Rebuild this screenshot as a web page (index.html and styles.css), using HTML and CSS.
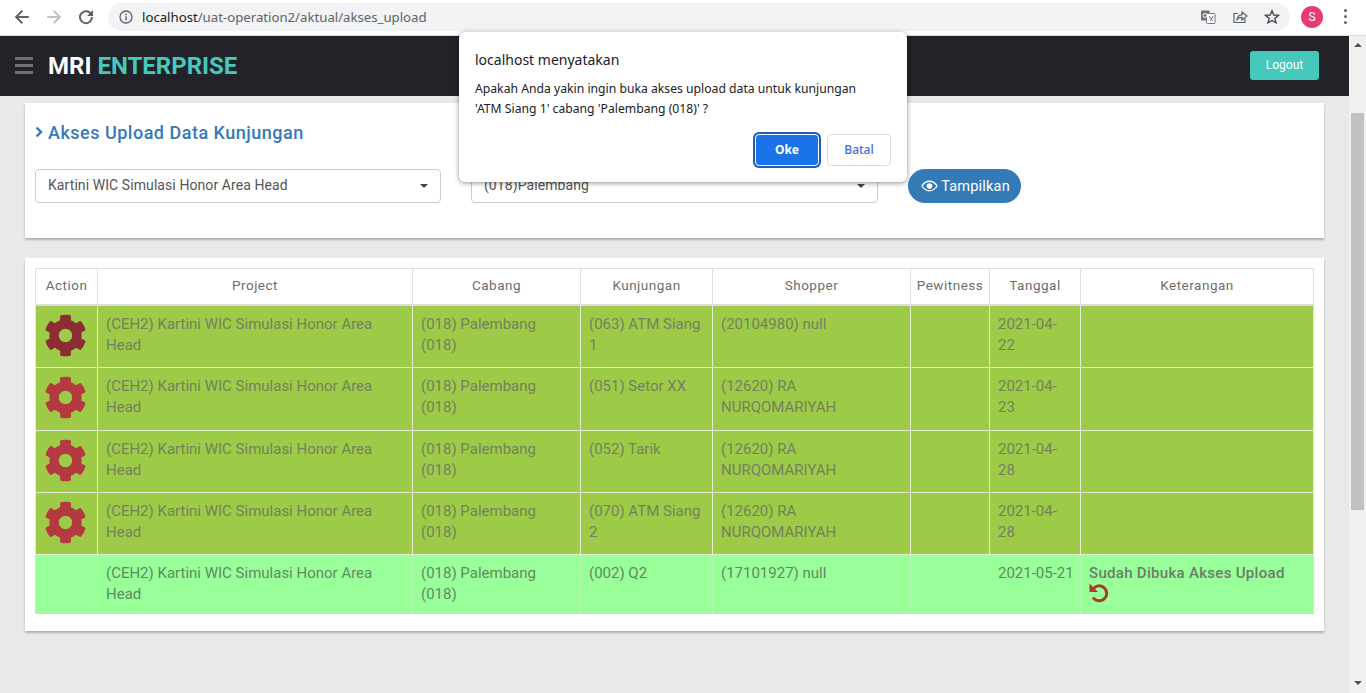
FILE: index.html
```html
<!Doctype html>
<html>

<head>
    <meta charset="utf-8">
    <title>Akses Upload</title>
    <link rel="stylesheet" href="styles.css">
</head>

<body>
    <!-- browser toolbar -->
    <div class="toolbar">
        <svg class="navIcon first" viewBox="0 0 16 16"><path d="M14.800 8H2.500M8.300 1.800L2.100 8 8.300 14.200" fill="none" stroke="#5f6368" stroke-width="2"/></svg>
        <svg class="navIcon" viewBox="0 0 16 16"><path d="M1.200 8H13.500M7.700 1.800L13.900 8 7.700 14.200" fill="none" stroke="#bdc1c6" stroke-width="2"/></svg>
        <svg class="navIcon reload" viewBox="0 0 16 16"><path d="M13.200 5.200A6 6 0 1 0 14 8" fill="none" stroke="#5f6368" stroke-width="2"/><path d="M15 1V7H9z" fill="#5f6368"/></svg>
        <div class="omnibox">
            <svg class="infoIcon" viewBox="0 0 14 14"><circle cx="7" cy="7" r="6" fill="none" stroke="#5f6368" stroke-width="1.300"/><path d="M7 6.200V10.400M7 3.600V5.200" stroke="#5f6368" stroke-width="1.400"/></svg>
            <span class="url"><b>localhost</b>/uat-operation2/aktual/akses_upload</span>
            <div class="omniIcons">
                <svg class="omniIcon" viewBox="0 0 16 16"><rect x="1" y="1.500" width="8.500" height="10" rx="1" fill="#6f7377"/><rect x="6.500" y="4.500" width="8.500" height="10" rx="1" fill="#fff" stroke="#6f7377"/><path d="M9 7l4 5M13 7l-3 5" stroke="#6f7377" stroke-width="1" fill="none"/><circle cx="5" cy="6.500" r="2" fill="none" stroke="#fff"/></svg>
                <svg class="omniIcon" viewBox="0 0 16 16"><path d="M13 9.500V13.500H2V4.500H6" fill="none" stroke="#5f6368" stroke-width="1.200"/><path d="M5 10.500C5.500 7.500 7.500 5.800 10 5.600V3l5 4-5 4V8.400C8 8.400 6.300 9 5 10.500z" fill="none" stroke="#5f6368" stroke-width="1.200"/></svg>
                <svg class="omniIcon" viewBox="0 0 16 16"><path d="M8 1.800L9.800 6 14.400 6.400 10.900 9.400 12 13.900 8 11.500 4 13.900 5.100 9.400 1.600 6.400 6.200 6z" fill="none" stroke="#45494d" stroke-width="1.400"/></svg>
            </div>
        </div>
        <div class="avatar">S</div>
        <div class="kebab"><i></i><i></i><i></i></div>
    </div>

    <div class="viewport">
        <div class="page">
            <div class="navbar">
                <div class="burger"><i></i><i></i><i></i></div>
                <div class="logo">MRI <span class="logoAccent">ENTERPRISE</span></div>
                <button class="logoutButton">Logout</button>
            </div>

            <div class="card filterCard">
                <h4 class="cardTitle">
                    <svg class="chevron" viewBox="0 0 8 12"><path d="M1.500 1.500L6 6 1.500 10.500" fill="none" stroke="#337ab7" stroke-width="2.400"/></svg>
                    <span>Akses Upload Data Kunjungan</span>
                </h4>
                <div class="filterRow">
                    <div class="selectBox">Kartini WIC Simulasi Honor Area Head<span class="caret"></span></div>
                    <div class="selectBox">(018)Palembang<span class="caret"></span></div>
                    <button class="showButton">
                        <svg class="eye" viewBox="0 0 18 12"><path d="M1 6C3 2.800 5.800 1 9 1s6 1.800 8 5c-2 3.200-4.800 5-8 5S3 9.200 1 6z" fill="none" stroke="#fff" stroke-width="1.400"/><circle cx="9" cy="6" r="3" fill="#fff"/></svg>
                        Tampilkan
                    </button>
                </div>
            </div>

            <div class="card tableCard">
                <table class="dataTable">
                    <colgroup>
                        <col class="colAction"><col class="colProject"><col class="colCabang"><col class="colKunjungan">
                        <col class="colShopper"><col class="colPewitness"><col class="colTanggal"><col class="colKet">
                    </colgroup>
                    <thead>
                        <tr>
                            <th>Action</th><th>Project</th><th>Cabang</th><th>Kunjungan</th>
                            <th>Shopper</th><th>Pewitness</th><th>Tanggal</th><th>Keterangan</th>
                        </tr>
                    </thead>
                    <tbody>
                        <tr class="rowLocked rowTall">
                            <td class="actionCell"><svg class="gear gearHover" viewBox="0 0 512 512"><use href="#cog"/></svg></td>
                            <td>(CEH2) Kartini WIC Simulasi Honor Area Head</td><td>(018) Palembang (018)</td><td>(063) ATM Siang 1</td>
                            <td>(20104980) null</td><td></td><td>2021-04-22</td><td></td>
                        </tr>
                        <tr class="rowLocked rowTall">
                            <td class="actionCell"><svg class="gear" viewBox="0 0 512 512"><use href="#cog"/></svg></td>
                            <td>(CEH2) Kartini WIC Simulasi Honor Area Head</td><td>(018) Palembang (018)</td><td>(051) Setor XX</td>
                            <td>(12620) RA NURQOMARIYAH</td><td></td><td>2021-04-23</td><td></td>
                        </tr>
                        <tr class="rowLocked">
                            <td class="actionCell"><svg class="gear" viewBox="0 0 512 512"><use href="#cog"/></svg></td>
                            <td>(CEH2) Kartini WIC Simulasi Honor Area Head</td><td>(018) Palembang (018)</td><td>(052) Tarik</td>
                            <td>(12620) RA NURQOMARIYAH</td><td></td><td>2021-04-28</td><td></td>
                        </tr>
                        <tr class="rowLocked">
                            <td class="actionCell"><svg class="gear" viewBox="0 0 512 512"><use href="#cog"/></svg></td>
                            <td>(CEH2) Kartini WIC Simulasi Honor Area Head</td><td>(018) Palembang (018)</td><td>(070) ATM Siang 2</td>
                            <td>(12620) RA NURQOMARIYAH</td><td></td><td>2021-04-28</td><td></td>
                        </tr>
                        <tr class="rowOpen">
                            <td></td>
                            <td>(CEH2) Kartini WIC Simulasi Honor Area Head</td><td>(018) Palembang (018)</td><td>(002) Q2</td>
                            <td>(17101927) null</td><td></td><td class="noWrap">2021-05-21</td>
                            <td><b class="opened">Sudah Dibuka Akses Upload</b>
                                <svg class="undo" viewBox="0 0 20 20"><path d="M4.500 5.500A7.500 7.500 0 1 1 4 14.500" fill="none" stroke="#a93a2c" stroke-width="3"/><path d="M0.500 0.500L9 9H0.500z" fill="#a93a2c"/></svg>
                            </td>
                        </tr>
                    </tbody>
                </table>
            </div>
        </div>

        <div class="scrollbar">
            <span class="arrowUp"></span>
            <div class="thumb"></div>
            <span class="arrowDown"></span>
        </div>
    </div>

    <!-- chrome confirm dialog -->
    <div class="dialog">
        <div class="dialogTitle">localhost menyatakan</div>
        <div class="dialogText">Apakah Anda yakin ingin buka akses upload data untuk kunjungan<br>'ATM Siang 1' cabang 'Palembang (018)' ?</div>
        <div class="dialogButtons">
            <button class="okButton">Oke</button>
            <button class="cancelButton">Batal</button>
        </div>
    </div>

    <svg class="defs">
        <defs>
            <path id="cog" d="M487.400 315.700l-42.600-24.600c4.300-23.200 4.300-47 0-70.200l42.600-24.600c4.900-2.800 7.100-8.600 5.500-14-11.100-35.600-30-67.800-54.700-94.600-3.800-4.100-10-5.100-14.800-2.300L380.800 110c-17.900-15.400-38.500-27.300-60.800-35.100V25.800c0-5.600-3.900-10.500-9.400-11.700-36.700-8.200-74.300-7.800-109.200 0-5.500 1.200-9.400 6.100-9.400 11.700V75c-22.200 7.900-42.800 19.800-60.800 35.100L88.700 85.500c-4.900-2.800-11-1.900-14.800 2.300-24.700 26.700-43.600 58.900-54.700 94.600-1.700 5.400.6 11.200 5.500 14L67.300 221c-4.300 23.200-4.300 47 0 70.200l-42.600 24.600c-4.900 2.800-7.100 8.600-5.500 14 11.100 35.600 30 67.800 54.700 94.600 3.800 4.100 10 5.100 14.800 2.300l42.600-24.600c17.900 15.400 38.500 27.300 60.800 35.100v49.200c0 5.600 3.900 10.500 9.400 11.700 36.700 8.200 74.300 7.800 109.200 0 5.500-1.200 9.400-6.100 9.400-11.700v-49.200c22.200-7.900 42.800-19.800 60.800-35.100l42.600 24.600c4.900 2.800 11 1.900 14.800-2.300 24.700-26.700 43.600-58.900 54.700-94.600 1.500-5.500-.7-11.300-5.600-14.100zM256 336c-44.100 0-80-35.900-80-80s35.900-80 80-80 80 35.900 80 80-35.900 80-80 80z"/>
        </defs>
    </svg>
</body>

</html>
```

FILE: styles.css
```css
* {
    box-sizing: border-box;
    font-family: Roboto, "Noto Sans", sans-serif;
}

html,
body {
    margin: 0;
    height: 693px;
    overflow: hidden;
}

body {
    position: relative;
    display: flex;
    flex-direction: column;
    background: #e9e9ea;
}

.defs {
    display: none;
}

/* browser toolbar */
.toolbar {
    height: 36px;
    flex: none;
    display: flex;
    align-items: center;
    background: #fff;
    border-bottom: 1px solid #dadce0;
    padding-bottom: 2px;
}

.navIcon {
    width: 16px;
    height: 16px;
    margin-right: 16px;
}

.navIcon.first {
    margin-left: 14px;
}

.navIcon.reload {
    margin-right: 14px;
}

.omnibox {
    width: 1182px;
    height: 28px;
    border-radius: 14px;
    background: #f1f3f4;
    display: flex;
    align-items: center;
    padding-left: 11px;
}

.infoIcon {
    width: 14px;
    height: 14px;
    margin-right: 9px;
}

.url {
    font-family: "Noto Sans", sans-serif;
    font-size: 13.2px;
    color: #5f6368;
}

.url b {
    font-family: "Noto Sans", sans-serif;
    font-weight: 400;
    color: #202124;
}

.omniIcons {
    margin-left: auto;
    margin-right: 10px;
    display: flex;
    gap: 16px;
}

.omniIcon {
    width: 16px;
    height: 16px;
}

.avatar {
    width: 22px;
    height: 22px;
    margin-left: 11px;
    border-radius: 50%;
    background: #ea3a72;
    color: #fff;
    font-size: 12px;
    line-height: 22px;
    text-align: center;
}

.kebab {
    margin-left: 21px;
    display: flex;
    flex-direction: column;
    gap: 3px;
}

.kebab i {
    width: 3px;
    height: 3px;
    border-radius: 50%;
    background: #5f6368;
}

/* page */
.viewport {
    flex: 1;
    display: flex;
    min-height: 0;
}

.page {
    flex: 1;
    min-width: 0;
}

.navbar {
    height: 60px;
    background: #212328;
    display: flex;
    align-items: center;
    padding: 0 30px 0 15px;
}

.burger {
    display: flex;
    flex-direction: column;
    gap: 4px;
    margin-right: 15px;
    margin-bottom: 1px;
}

.burger i {
    width: 18px;
    height: 3px;
    background: #6f7072;
}

.logo {
    color: #fff;
    font-size: 24px;
    font-weight: 700;
}

.logoAccent {
    color: #46c8bd;
    font: inherit;
}

.logoutButton {
    margin-left: auto;
    margin-bottom: 2px;
    width: 69px;
    height: 29px;
    border: 0;
    border-radius: 3px;
    background: #46c8bd;
    color: #fff;
    font-size: 12px;
}

.card {
    margin: 0 25px;
    background: #fff;
    box-shadow: 0 2px 2px #a9afb9;
    padding: 10px;
}

.filterCard {
    margin-top: 7px;
    height: 135px;
}

.cardTitle {
    margin: 9px 0 0 0;
    height: 20px;
    display: flex;
    align-items: center;
    color: #337ab7;
    font-size: 18px;
    font-weight: 500;
    letter-spacing: 0.5px;
}

.chevron {
    width: 8px;
    height: 12px;
    margin-right: 5px;
}

.filterRow {
    margin-top: 27px;
    display: flex;
    align-items: center;
}

.selectBox {
    width: 406px;
    height: 34px;
    margin-right: 30px;
    padding: 0 0 2px 12px;
    display: flex;
    align-items: center;
    border: 1px solid #ccc;
    border-radius: 4px;
    color: #555;
    font-size: 14px;
    letter-spacing: 0.08px;
}

.selectBox + .selectBox {
    width: 407px;
}

.caret {
    margin-left: auto;
    margin-top: 2px;
    margin-right: 12px;
    border-top: 4px solid #444;
    border-left: 4px solid transparent;
    border-right: 4px solid transparent;
}

.showButton {
    width: 113px;
    height: 34px;
    border: 0;
    border-radius: 17px;
    background: #337ab7;
    color: #fff;
    font-size: 14.5px;
    letter-spacing: 0.2px;
    display: flex;
    align-items: center;
    justify-content: center;
    gap: 3px;
    padding-left: 8px;
}

.eye {
    width: 17px;
    height: 12px;
}

.tableCard {
    margin-top: 20px;
    height: 373px;
}

/* data table */
.dataTable {
    width: 1278px;
    table-layout: fixed;
    border-collapse: collapse;
    color: #76805f;
    font-size: 15px;
    line-height: 21.4px;
}

.colAction { width: 62px; }
.colProject { width: 315px; }
.colCabang { width: 168px; }
.colKunjungan { width: 132px; }
.colShopper { width: 198px; }
.colPewitness { width: 79px; }
.colTanggal { width: 91px; }
.colKet { width: 233px; }

th {
    height: 36px;
    padding: 0 0 2px 0;
    border: 1px solid #ddd;
    border-bottom: 2px solid #ddd;
    color: #6d6d6d;
    font-size: 13.5px;
    font-weight: 400;
    letter-spacing: 0.5px;
    text-align: center;
}

td {
    padding: 8px;
    vertical-align: top;
    border: 1px solid #e4ecd4;
}

.noWrap {
    white-space: nowrap;
}

.rowLocked {
    height: 62px;
    background: #9dcb47;
}

.rowTall {
    height: 63px;
}

.rowOpen {
    height: 59px;
    background: #99ff99;
    color: #5f8a62;
}

.rowOpen td {
    border-color: #b7f5b2;
    border-bottom: 0;
}

.actionCell {
    padding: 8px 2px 0 0;
    text-align: center;
}

.gear {
    display: block;
    width: 43px;
    height: 43px;
    margin: 0 auto;
    fill: #b23a40;
}

.gearHover {
    fill: #8a2e33;
}

.opened {
    color: #6b7c6b;
    font-weight: 500;
    letter-spacing: 0.3px;
}

.undo {
    display: block;
    width: 20px;
    height: 20px;
    margin-top: -1px;
}

/* scrollbar */
.scrollbar {
    width: 17px;
    flex: none;
    background: #f1f1f1;
    display: flex;
    flex-direction: column;
    align-items: center;
    padding-top: 7px;
}

.thumb {
    width: 13px;
    height: 397px;
    margin-top: 66px;
    background: #c1c1c1;
}

.arrowUp,
.arrowDown {
    border-left: 4px solid transparent;
    border-right: 4px solid transparent;
}

.arrowUp {
    border-bottom: 4px solid #505050;
}

.arrowDown {
    margin-top: auto;
    margin-bottom: 8px;
    border-top: 4px solid #505050;
}

/* confirm dialog, lies over the page */
.dialog {
    position: absolute;
    left: 459px;
    top: 32px;
    width: 448px;
    height: 150px;
    background: #fff;
    border-radius: 6px;
    box-shadow: 0 1px 5px rgba(0, 0, 0, 0.45);
    padding: 19px 16px 0 16px;
}

.dialogTitle {
    font-family: "Noto Sans", sans-serif;
    font-size: 14px;
    line-height: 18px;
    color: #202124;
}

.dialogText {
    margin-top: 10px;
    font-family: "Noto Sans", sans-serif;
    font-size: 12.2px;
    line-height: 20px;
    color: #202124;
}

.dialogButtons {
    margin-top: 15px;
    display: flex;
    justify-content: flex-end;
    gap: 8px;
}

.okButton,
.cancelButton {
    width: 64px;
    height: 32px;
    border-radius: 4px;
    padding-bottom: 3px;
    font-family: "Noto Sans", sans-serif;
    font-size: 12px;
}

.okButton {
    background: #1a73e8;
    color: #fff;
    font-weight: 700;
    border: 1px solid #fff;
    box-shadow: 0 0 0 2px #1f5fb8;
}

.cancelButton {
    background: #fff;
    color: #3b6fd6;
    font-weight: 500;
    border: 1px solid #dadce0;
}
```
